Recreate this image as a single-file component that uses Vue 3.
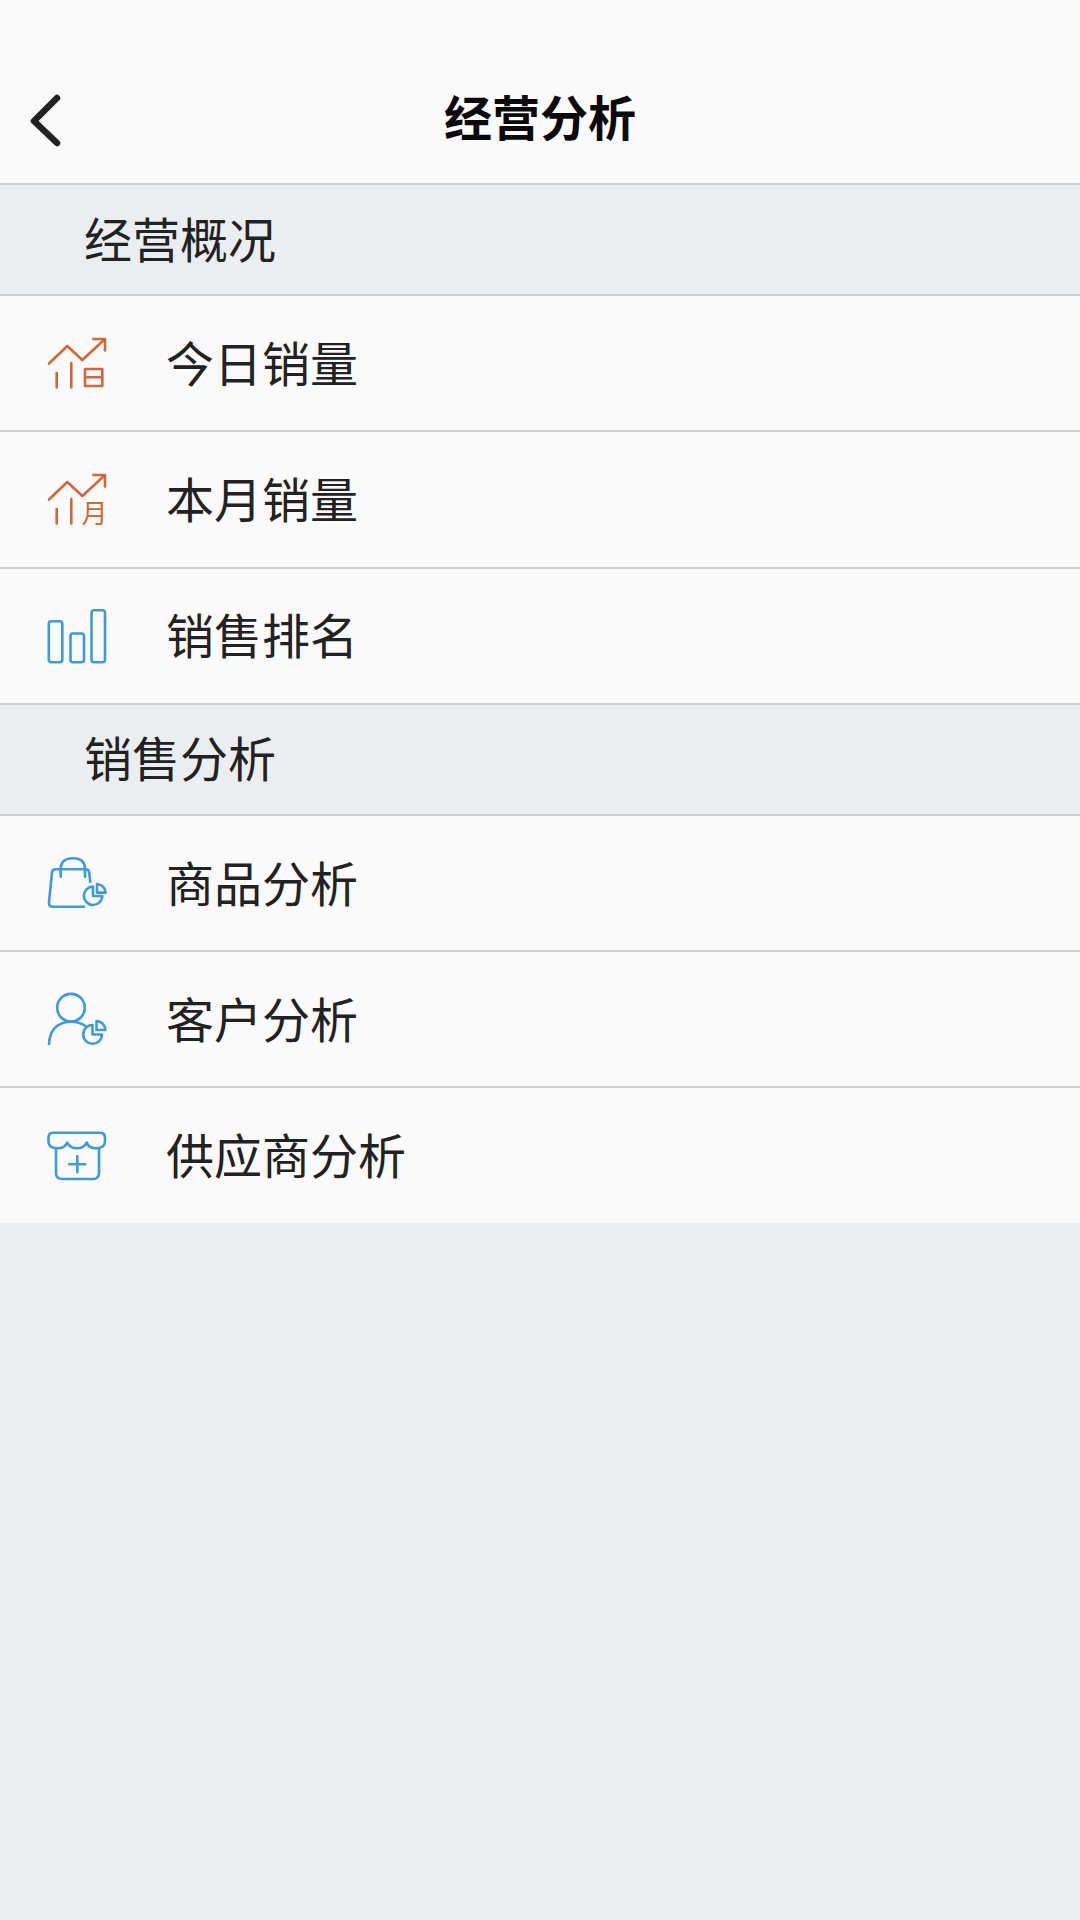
<script setup>
const groupOne = [
  { label: '今日销量', icon: 'today' },
  { label: '本月销量', icon: 'month' },
  { label: '销售排名', icon: 'rank' }
]
const groupTwo = [
  { label: '商品分析', icon: 'bag' },
  { label: '客户分析', icon: 'user' },
  { label: '供应商分析', icon: 'store' }
]
const sections = [
  { title: '经营概况', rows: groupOne },
  { title: '销售分析', rows: groupTwo }
]
</script>

<template>
  <div class="page">
    <header class="bar">
      <svg class="back" width="40" height="60" viewBox="0 0 40 60">
        <path d="M32 8 L9 31 L32 53" />
      </svg>
      <h1 class="title">经营分析</h1>
    </header>
    <section v-for="s in sections" :key="s.title">
      <div class="head">{{ s.title }}</div>
      <div v-for="r in s.rows" :key="r.label" class="row">
        <svg class="icon" :class="r.icon === 'today' || r.icon === 'month' ? 'orange' : 'blue'" width="62" height="60" viewBox="0 0 62 60">
          <template v-if="r.icon === 'today' || r.icon === 'month'">
            <path d="M2 29.5 L20.3 12 L35.3 26 L57 6" />
            <path d="M46.3 5 L58 5 L58 16.5" />
            <path d="M9.7 39 V53.5 M24.3 29 V53.5" />
            <path v-if="r.icon === 'today'" d="M38 35 H55.3 V52 H38 Z M38 43.3 H55.3" />
            <text v-else x="34.5" y="53" class="glyph">月</text>
          </template>
          <template v-else-if="r.icon === 'rank'">
            <rect x="1.8" y="15.2" width="13.5" height="41" rx="2.5" />
            <rect x="23.5" y="27.5" width="13.5" height="28.7" rx="2.5" />
            <rect x="44.5" y="4.2" width="13.5" height="52" rx="2.5" />
          </template>
          <template v-else-if="r.icon === 'bag'">
            <path d="M37 52.8 H6 Q1.6 52.8 2 48 L5 18.5 Q5.4 15.3 8.6 15.3 H38.5 Q41.8 15.3 42.2 18.5 L43.3 28" />
            <path d="M13.7 22.7 V15 Q13.7 4.3 26 4.3 Q38 4.3 38 15 V22.7" />
            <path d="M46 32.6 A9.2 9.2 0 1 0 55.3 42 H46 Z" />
            <path d="M50 30 A9.2 9.2 0 0 1 58.6 38.6 H50 Z" />
          </template>
          <template v-else-if="r.icon === 'user'">
            <circle cx="24" cy="17.7" r="13.8" />
            <path d="M2 54 Q3 33 23 31.7 Q32 31.5 38.5 36" />
            <path d="M45.5 35 A9.4 9.4 0 1 0 55 44.5 H45.5 Z" />
            <path d="M49.5 31 A9.2 9.2 0 0 1 58.4 40 H49.5 Z" />
          </template>
          <template v-else>
            <path d="M6 6.7 H53 Q58 6.7 58 11.5 V15 Q58 22.3 49 22.3 Q41.5 22.3 39.7 16.5 Q37 22.3 30 22.3 Q23 22.3 20.3 16.5 Q18 22.3 10.5 22.3 Q1.5 22.3 1.5 15 V11.5 Q1.5 6.7 6 6.7 Z" />
            <path d="M9 22 V47 Q9 53 15 53 H46 Q52 53 52 47 V22" />
            <path d="M22.3 38.3 H38.3 M30.3 30.3 V46.3" />
          </template>
        </svg>
        <span class="label">{{ r.label }}</span>
      </div>
    </section>
    <div class="rest"></div>
  </div>
</template>

<style scoped>
.page {
  width: 1080px;
  min-height: 1920px;
  background: #eaeef1;
  display: flex;
  flex-direction: column;
  font-family: "Noto Sans CJK SC", "Noto Sans", sans-serif;
  color: #222;
}
.bar {
  height: 183px;
  background: #fafafa;
  border-bottom: 2px solid #ccd0d5;
  position: relative;
  display: flex;
  align-items: flex-end;
  justify-content: center;
}
.title {
  margin: 0 0 34px;
  font-size: 48px;
  line-height: 68px;
  font-weight: 700;
  color: #0a0a0a;
}
.back {
  position: absolute;
  left: 25px;
  top: 90px;
}
.back path {
  fill: none;
  stroke: #222;
  stroke-width: 6.5px;
  stroke-linecap: round;
  stroke-linejoin: round;
}
.head {
  height: 103px;
  padding: 0 0 6px 84px;
  display: flex;
  align-items: center;
  font-size: 48px;
  background: #eaeef1;
  border-bottom: 2px solid #ccd0d5;
}
.row {
  height: 134.3px;
  padding-left: 47px;
  display: flex;
  align-items: center;
  background: #fafafa;
  border-bottom: 2px solid #ccd0d5;
}
section:last-of-type .row:last-child {
  border-bottom: 0;
}
.icon {
  flex: none;
  margin: 1px 57px 0 0;
  fill: none;
  stroke-width: 2.6px;
  stroke-linecap: round;
  stroke-linejoin: round;
}
.orange { stroke: #d0693a; }
.blue { stroke: #3f9ad6; }
.glyph {
  font-size: 26px;
  fill: #d0693a;
  stroke: none;
  font-family: "Noto Sans CJK SC", sans-serif;
}
.label {
  font-size: 48px;
  line-height: 68px;
  margin-bottom: 5px;
}
.rest {
  flex: 1;
}
</style>
